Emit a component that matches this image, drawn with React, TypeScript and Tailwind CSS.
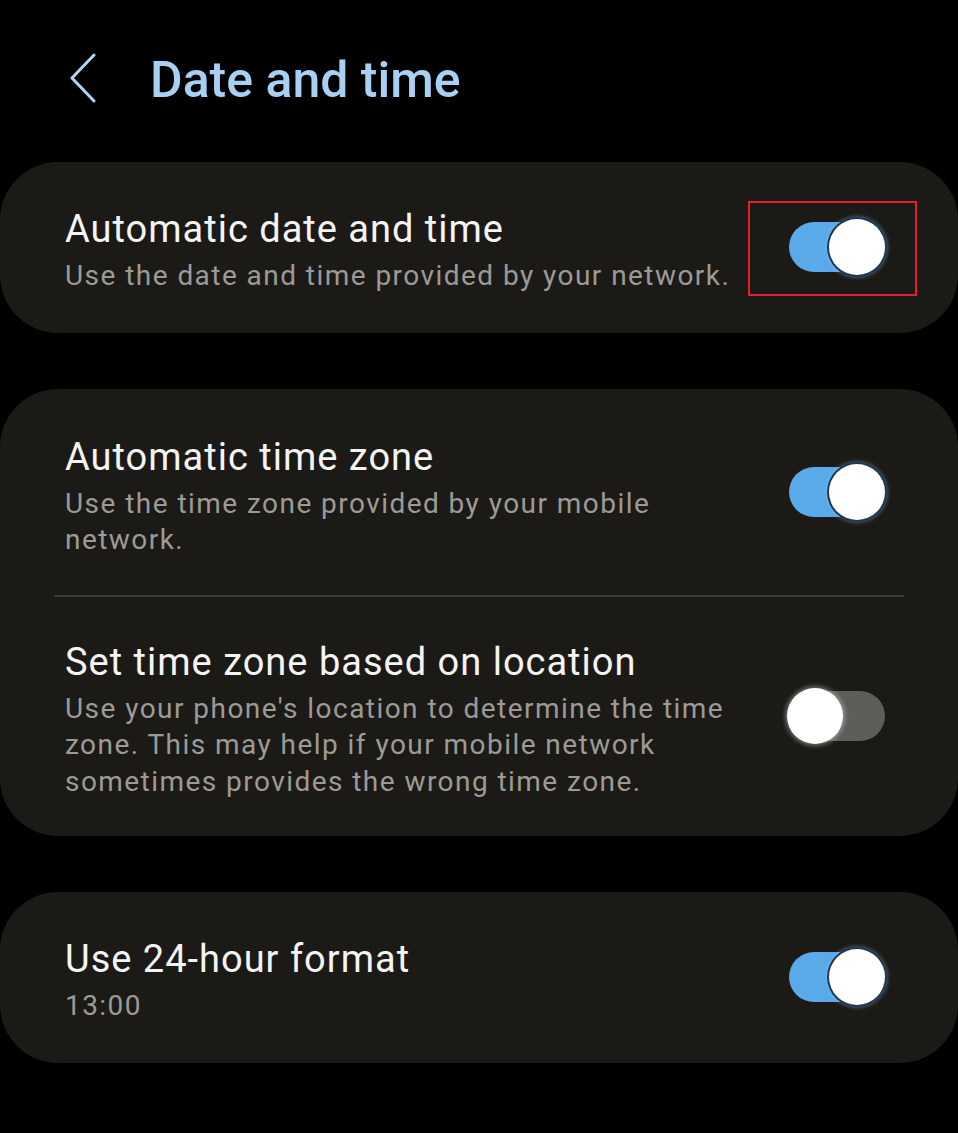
import React, { useState } from "react";

type Setting = {
  id: string;
  title: string;
  summary: string;
  on: boolean;
  highlight?: boolean;
};

const groups: Setting[][] = [
  [
    {
      id: "auto-datetime",
      title: "Automatic date and time",
      summary: "Use the date and time provided by your network.",
      on: true,
      highlight: true,
    },
  ],
  [
    {
      id: "auto-timezone",
      title: "Automatic time zone",
      summary: "Use the time zone provided by your mobile network.",
      on: true,
    },
    {
      id: "location-timezone",
      title: "Set time zone based on location",
      summary:
        "Use your phone's location to determine the time zone. This may help if your mobile network sometimes provides the wrong time zone.",
      on: false,
    },
  ],
  [
    {
      id: "24-hour",
      title: "Use 24-hour format",
      summary: "13:00",
      on: true,
    },
  ],
];

function Toggle({ on, onChange }: { on: boolean; onChange: () => void }) {
  return (
    <button
      onClick={onChange}
      className={`relative flex h-[50px] w-[96px] shrink-0 items-center rounded-full ${
        on ? "bg-[#5aa9e9]" : "bg-[#5d5d5a]"
      }`}
    >
      <span
        className={`absolute top-[-3px] h-[56px] w-[56px] rounded-full bg-white ${
          on
            ? "right-0 shadow-[0_0_0_2px_#1e3b55,0_0_4px_2px_rgba(160,210,250,0.5)]"
            : "left-[-2px] shadow-[0_0_4px_2px_rgba(255,255,255,0.35)]"
        }`}
      />
    </button>
  );
}

function Row({
  item,
  onToggle,
  className,
}: {
  item: Setting;
  onToggle: () => void;
  className: string;
}) {
  return (
    <div className="flex items-center pl-[65px] pr-[73px]">
      <div className={`min-w-0 flex-1 pr-[48px] ${className}`}>
        <div className="text-[38px] leading-[44px] tracking-[1px] text-[#f4f4f4]">
          {item.title}
        </div>
        <div className="mt-[7px] text-[28px] leading-[36.5px] tracking-[1.45px] text-[#9c9a96]">
          {item.summary}
        </div>
      </div>
      <div className="relative">
        <Toggle on={item.on} onChange={onToggle} />
        {item.highlight && (
          <span className="pointer-events-none absolute -top-[21px] -bottom-[24px] -left-[41px] -right-[32px] border-2 border-[#e0202a]" />
        )}
      </div>
    </div>
  );
}

export default function App() {
  const [state, setState] = useState(groups);

  const flip = (g: number, i: number) =>
    setState((prev) =>
      prev.map((group, gi) =>
        gi !== g ? group : group.map((s, si) => (si === i ? { ...s, on: !s.on } : s)),
      ),
    );

  return (
    <div
      className="min-h-screen w-[958px] bg-black pb-[71px]"
      style={{ fontFamily: "Roboto, 'Noto Sans', sans-serif" }}
    >
      <header className="flex h-[162px] items-start pt-[52px]">
        <button className="ml-[68px] mt-[1px] h-[50px] w-[30px] text-[#b4d4ee]">
          <svg viewBox="0 0 30 50" className="h-full w-full" fill="none">
            <path d="M26 2 L4 25 L26 48" stroke="currentColor" strokeWidth="3" strokeLinecap="round" strokeLinejoin="round" />
          </svg>
        </button>
        <h1 className="ml-[52px] text-[50px] font-medium leading-[56px] text-[#a8d0f2]">
          Date and time
        </h1>
      </header>

      <div className="flex flex-col gap-[56px]">
        {state.map((group, g) => (
          <section key={g} className="rounded-[58px] bg-[#1c1a17]">
            {group.map((item, i) => (
              <React.Fragment key={item.id}>
                {i > 0 && <div className="mx-[54px] h-[2px] bg-[#3a3935]" />}
                <Row
                  item={item}
                  onToggle={() => flip(g, i)}
                  className={
                    group.length === 1
                      ? "pt-[45px] pb-[38px]"
                      : i === 0
                        ? "pt-[46px] pb-[36px]"
                        : "pt-[43px] pb-[36px]"
                  }
                />
              </React.Fragment>
            ))}
          </section>
        ))}
      </div>
    </div>
  );
}
